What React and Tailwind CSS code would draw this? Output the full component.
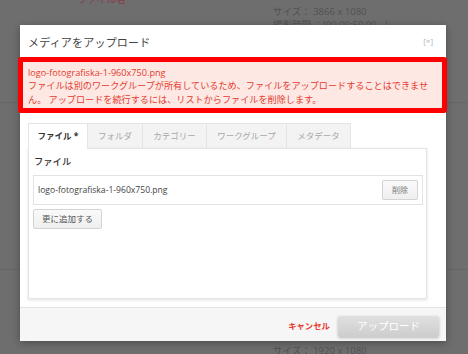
import React from "react";

const font = { fontFamily: '"Open Sans", "Noto Sans CJK JP", sans-serif' };

function Tab({ w, children, active }) {
  return (
    <div
      className={
        "h-[25px] flex items-center justify-center border-t border-r border-[#e4e4e4] text-[8.5px] " +
        (active
          ? "bg-white text-[#333] font-bold border-l mb-[-1px] h-[26px] relative z-10"
          : "bg-[#f3f3f3] text-[#a8a8a8]")
      }
      style={{ width: w }}
    >
      {children}
    </div>
  );
}

export default function App() {
  return (
    <div
      className="relative w-[468px] h-[354px] overflow-hidden bg-[#6e6e6e]"
      style={font}
    >
      {/* background page */}
      <div className="flex flex-col text-[#525252]">
        <div className="h-[103px] border-b border-[#666] relative">
          <div className="pl-[78px] -mt-[6px] text-[9.5px] text-[#8a3a48] leading-[12px]">
            ファイル名
          </div>
          <div className="pl-[273px] text-[9.5px] leading-[13px] mt-[-1px]">
            <div>サイズ： 3866 x 1080</div>
            <div>撮影時間 ：(00:00:50.00 - )</div>
          </div>
        </div>
        <div className="h-[167px] border-b border-[#666]" />
        <div className="pt-[74px] pl-[273px] text-[9.5px] leading-[13px]">
          サイズ： 1920 x 1080
        </div>
      </div>

      {/* modal */}
      <div className="absolute left-[20px] top-[25px] w-[426px] h-[316px] bg-white flex flex-col shadow-[0_2px_8px_rgba(0,0,0,0.3)]">
        <div className="h-[32px] flex items-center justify-between pl-[8px] pr-[13px] pt-[5px]">
          <div className="text-[11px] text-[#444] tracking-[0.2px]">メディアをアップロード</div>
          <div className="text-[8px] text-[#b0b0b0] -mt-[5px]">[×]</div>
        </div>
        <div className="-ml-[2px] w-[429px] h-[56px] border-[5px] border-[#ff0000] rounded-[3px] bg-[#fde8e4] pl-[5px] pt-[3.5px] text-[9.15px] leading-[13.5px] text-[#e43a2e] whitespace-nowrap overflow-hidden">
          <div>logo-fotografiska-1-960x750.png</div>
          <div>ファイルは別のワークグループが所有しているため、ファイルをアップロードすることはできませ</div>
          <div>ん。 アップロードを続行するには、リストからファイルを削除します。</div>
        </div>
        <div className="flex-1 pt-[10px] pl-[8px] pr-[19px] pb-[8px] flex flex-col">
          <div className="flex">
            <Tab w={60} active>ファイル *</Tab>
            <Tab w={55}>フォルダ</Tab>
            <Tab w={64}>カテゴリー</Tab>
            <Tab w={80}>ワークグループ</Tab>
            <Tab w={64}>メタデータ</Tab>
          </div>
          <div className="flex-1 border border-[#e4e4e4] shadow-[0_1px_3px_rgba(0,0,0,0.12)] pl-[4px] pr-[3px] flex flex-col">
            <div className="h-[26px] flex items-center pl-[1px] text-[9.3px] text-[#333] font-medium">ファイル</div>
            <div className="h-[30px] border border-[#e3e3e3] flex items-center justify-between pl-[4px] pr-[4px]">
              <span className="text-[8.6px] text-[#444]">logo-fotografiska-1-960x750.png</span>
              <div className="w-[36px] h-[20px] flex items-center justify-center border border-[#d4d4d4] rounded-[2px] bg-gradient-to-b from-[#fafafa] to-[#efefef] text-[8px] text-[#777]">
                削除
              </div>
            </div>
            <div className="mt-[4px] w-[69px] h-[20px] flex items-center justify-center border border-[#d4d4d4] rounded-[2px] bg-gradient-to-b from-[#fafafa] to-[#efefef] text-[8.5px] text-[#555]">
              更に追加する
            </div>
          </div>
        </div>
        <div className="h-[34px] border-t border-[#e2e2e2] bg-[#f6f6f6] flex items-center justify-end pr-[7px] gap-[8px]">
          <span className="text-[8.4px] text-[#e53a2f] font-bold mt-[4px]">キャンセル</span>
          <div className="w-[101px] h-[21px] mt-[4px] flex items-center justify-center rounded-[2px] bg-gradient-to-b from-[#e0e0e0] to-[#cdcdcd] shadow-[0_1px_3px_rgba(0,0,0,0.25)] text-[10.5px] text-white">
            アップロード
          </div>
        </div>
      </div>
    </div>
  );
}
